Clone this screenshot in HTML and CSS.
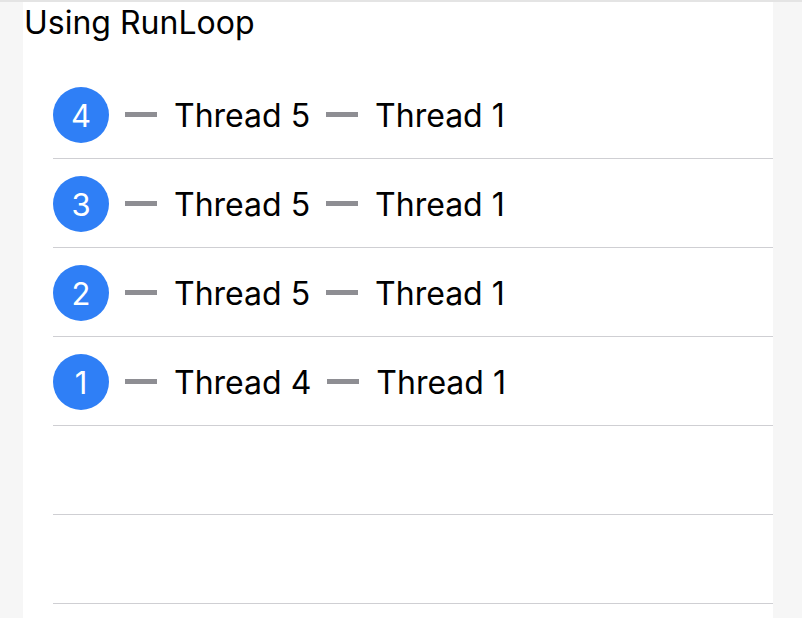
FILE: index.html
```html
<!DOCTYPE html>
<html>
<head>
<meta charset="utf-8">
<link rel="stylesheet" href="styles.css">
</head>
<body>
<div class="topbar"></div>
<div class="page">
  <div class="title">Using RunLoop</div>
  <div class="list">
    <div class="row"><span class="badge">4</span><span class="dash"></span><span class="label">Thread 5</span><span class="dash"></span><span class="label">Thread 1</span></div>
    <div class="row"><span class="badge">3</span><span class="dash"></span><span class="label">Thread 5</span><span class="dash"></span><span class="label">Thread 1</span></div>
    <div class="row"><span class="badge">2</span><span class="dash"></span><span class="label">Thread 5</span><span class="dash"></span><span class="label">Thread 1</span></div>
    <div class="row"><span class="badge">1</span><span class="dash"></span><span class="label">Thread 4</span><span class="dash"></span><span class="label">Thread 1</span></div>
    <div class="row"></div>
    <div class="row"></div>
  </div>
</div>
</body>
</html>
```
FILE: styles.css
```css
html, body {
  margin: 0;
  padding: 0;
  height: 100%;
  overflow: hidden;
}
body {
  background: #f6f6f6;
  font-family: Inter, "Liberation Sans", sans-serif;
  color: #000;
}
.topbar {
  height: 2px;
  background: #e4e4e4;
}
.page {
  display: flow-root;
  margin: 0 29px 0 23px;
  background: #fff;
  height: 616px;
}
.title {
  font-size: 32px;
  line-height: 40px;
  padding: 1px 0 0 1px;
}
.list {
  margin-top: 27px;
  margin-left: 30px;
}
.row {
  height: 88px;
  border-bottom: 1px solid #cfcfd3;
  display: flex;
  align-items: center;
}
.badge {
  width: 56px;
  height: 56px;
  border-radius: 50%;
  background: #2f7ff6;
  color: #fff;
  font-size: 31px;
  display: flex;
  align-items: center;
  justify-content: center;
  margin-top: 2px;
}
.dash {
  width: 32px;
  height: 5px;
  background: #8e8e93;
  margin: 1px 17px 0 16px;
}
.label {
  font-size: 32px;
  margin-top: 2px;
}
```
